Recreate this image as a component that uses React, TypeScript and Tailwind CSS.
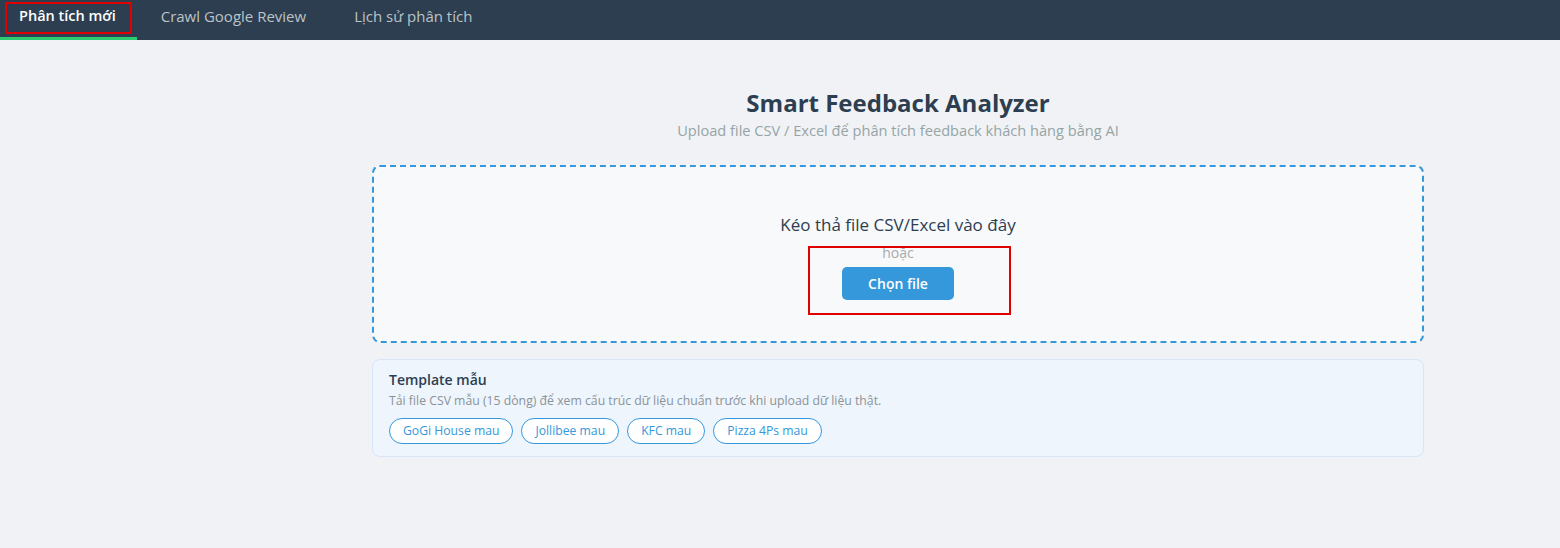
import React from "react";

const tabs = ["Phân tích mới", "Crawl Google Review", "Lịch sử phân tích"];
const templates = ["GoGi House mau", "Jollibee mau", "KFC mau", "Pizza 4Ps mau"];

export default function App() {
  return (
    <div
      className="relative min-h-[548px] bg-[#f0f2f5]"
      style={{ fontFamily: '"Open Sans", "Noto Sans", sans-serif' }}
    >
      {/* nav */}
      <nav className="flex h-10 bg-[#2c3e50]">
        {tabs.map((t, i) => (
          <button
            key={t}
            className={
              i === 0
                ? "flex items-start border-b-[3px] border-[#2ecc71] pl-[19px] pr-[21px] pt-[6px] text-[14.5px] font-semibold leading-[20px] text-white"
                : "flex items-start border-b-[3px] border-transparent px-6 pt-[6px] text-[15px] leading-[20px] text-[#bdc3c7]"
            }
          >
            {t}
          </button>
        ))}
      </nav>

      <main className="ml-[372px] w-[1052px] pt-[48px]">
        <div className="text-center">
          <h1 className="text-[24px] font-bold leading-[30px] text-[#2c3e50]">
            Smart Feedback Analyzer
          </h1>
          <p className="mt-[2px] text-[14.6px] leading-[20px] text-[#95a5a6]">
            Upload file CSV / Excel để phân tích feedback khách hàng bằng AI
          </p>
        </div>

        <div className="mt-[25px] flex h-[178px] flex-col items-center rounded-lg border-2 border-dashed border-[#3498db] bg-[#f7f9fb] pt-[46px]">
          <p className="text-[17px] leading-[24px] text-[#2c3e50]">
            Kéo thả file CSV/Excel vào đây
          </p>
          <p className="mt-[6px] text-[14px] leading-[20px] text-[#aaaaaa]">hoặc</p>
          <button className="mt-[4px] h-[33px] w-[112px] rounded-[5px] bg-[#3498db] text-[14px] font-semibold text-white">
            Chọn file
          </button>
        </div>

        <div className="mt-[16px] rounded-lg border border-[#d6e6f7] bg-[#eef5fd] px-4 pb-[12px] pt-[10px]">
          <h3 className="text-[14px] font-semibold leading-[20px] text-[#2c3e50]">Template mẫu</h3>
          <p className="mt-[2px] text-[12.25px] leading-[18px] text-[#8a9398]">
            Tải file CSV mẫu (15 dòng) để xem cấu trúc dữ liệu chuẩn trước khi upload dữ liệu thật.
          </p>
          <div className="mt-[8px] flex gap-2">
            {templates.map((t) => (
              <button
                key={t}
                className="h-[26px] rounded-full border border-[#3498db] bg-white px-[13px] text-[12.2px] font-medium text-[#3498db]"
              >
                {t}
              </button>
            ))}
          </div>
        </div>
      </main>

      {/* annotation boxes */}
      <div className="pointer-events-none absolute left-[5px] top-[2px] h-[32px] w-[127px] border-2 border-[#e00000]" />
      <div className="pointer-events-none absolute left-[808px] top-[246px] h-[69px] w-[203px] border-2 border-[#e00000]" />
    </div>
  );
}
